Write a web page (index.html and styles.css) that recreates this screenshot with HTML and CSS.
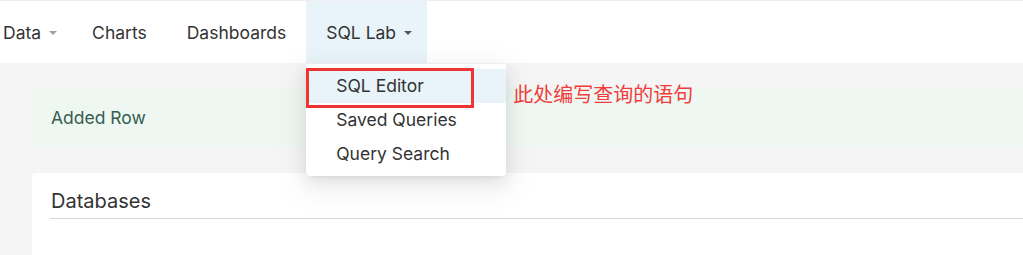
FILE: index.html
```html
<!DOCTYPE html>
<html>
	<head>
		<meta charset="UTF-8">
		<title>Databases</title>
		<link rel="stylesheet" href="styles.css">
	</head>
	<body>
		<div class="navbar">
			<ul class="menu">
				<li class="menu-item has-sub">Data<span class="caret"></span></li>
				<li class="menu-item">Charts</li>
				<li class="menu-item">Dashboards</li>
				<li class="menu-item has-sub open">SQL Lab<span class="caret dark"></span>
					<ul class="dropdown">
						<li class="drop-item active">SQL Editor</li>
						<li class="drop-item">Saved Queries</li>
						<li class="drop-item">Query Search</li>
					</ul>
					<div class="mark-box"></div>
					<div class="mark-text">此处编写查询的语句</div>
				</li>
			</ul>
		</div>
		<div class="main">
			<div class="alert">Added Row</div>
			<div class="card">
				<h2 class="card-title">Databases</h2>
			</div>
		</div>
	</body>
</html>
```

FILE: styles.css
```css
*{margin: 0;padding: 0;box-sizing: border-box;}
html,body{height: 100%;overflow: hidden;}
body{font-family: Inter, "Noto Sans CJK SC", sans-serif;font-size: 17.5px;color: #333;background: #f5f5f5;}
li{list-style: none;}
.navbar{height: 63px;background: #fff;border-top: 1px solid #eee;position: relative;z-index: 5;}
.menu{display: flex;height: 62px;margin-left: -17px;}
.menu-item{display: flex;align-items: center;padding: 0 20px;height: 62px;position: relative;color: #333;}
.menu-item.has-sub{padding-right: 15px;}
.menu-item.open{background: #e8f4f9;}
.caret{width: 0;height: 0;margin-left: 8px;margin-top: 2px;border-left: 4px solid transparent;border-right: 4px solid transparent;border-top: 4px solid #a0a0a0;}
.caret.dark{border-top-color: #555;}
.dropdown{position: absolute;left: 0;top: 63px;width: 200px;padding: 5px 0;background: #fff;border-radius: 0 0 4px 4px;box-shadow: 0 3px 6px -4px rgba(0,0,0,0.12), 0 6px 16px 0 rgba(0,0,0,0.08), 0 9px 28px 8px rgba(0,0,0,0.05);}
.drop-item{height: 34px;line-height: 34px;padding-left: 30px;color: #333;}
.drop-item.active{background: #e8f4f9;}
.mark-box{position: absolute;left: 0;top: 67px;width: 168px;height: 40px;border: 3px solid #f03434;}
.mark-text{position: absolute;left: 207px;top: 81px;white-space: nowrap;font-size: 20px;line-height: 24px;color: #f03c3c;font-family: "Noto Sans CJK SC", sans-serif;}
.main{padding: 25px 0 0 32px;}
.alert{height: 60px;line-height: 60px;padding-left: 19px;background: #eef7f1;color: #365e50;border-radius: 4px 0 0 4px;}
.card{margin-top: 25px;height: 200px;background: #fff;border-radius: 4px 0 0 0;padding: 16px 0 0 18px;}
.card-title{font-size: 20px;font-weight: normal;line-height: 25px;padding-bottom: 4px;padding-left: 1px;border-bottom: 1px solid #d0d7de;color: #333;}
```
